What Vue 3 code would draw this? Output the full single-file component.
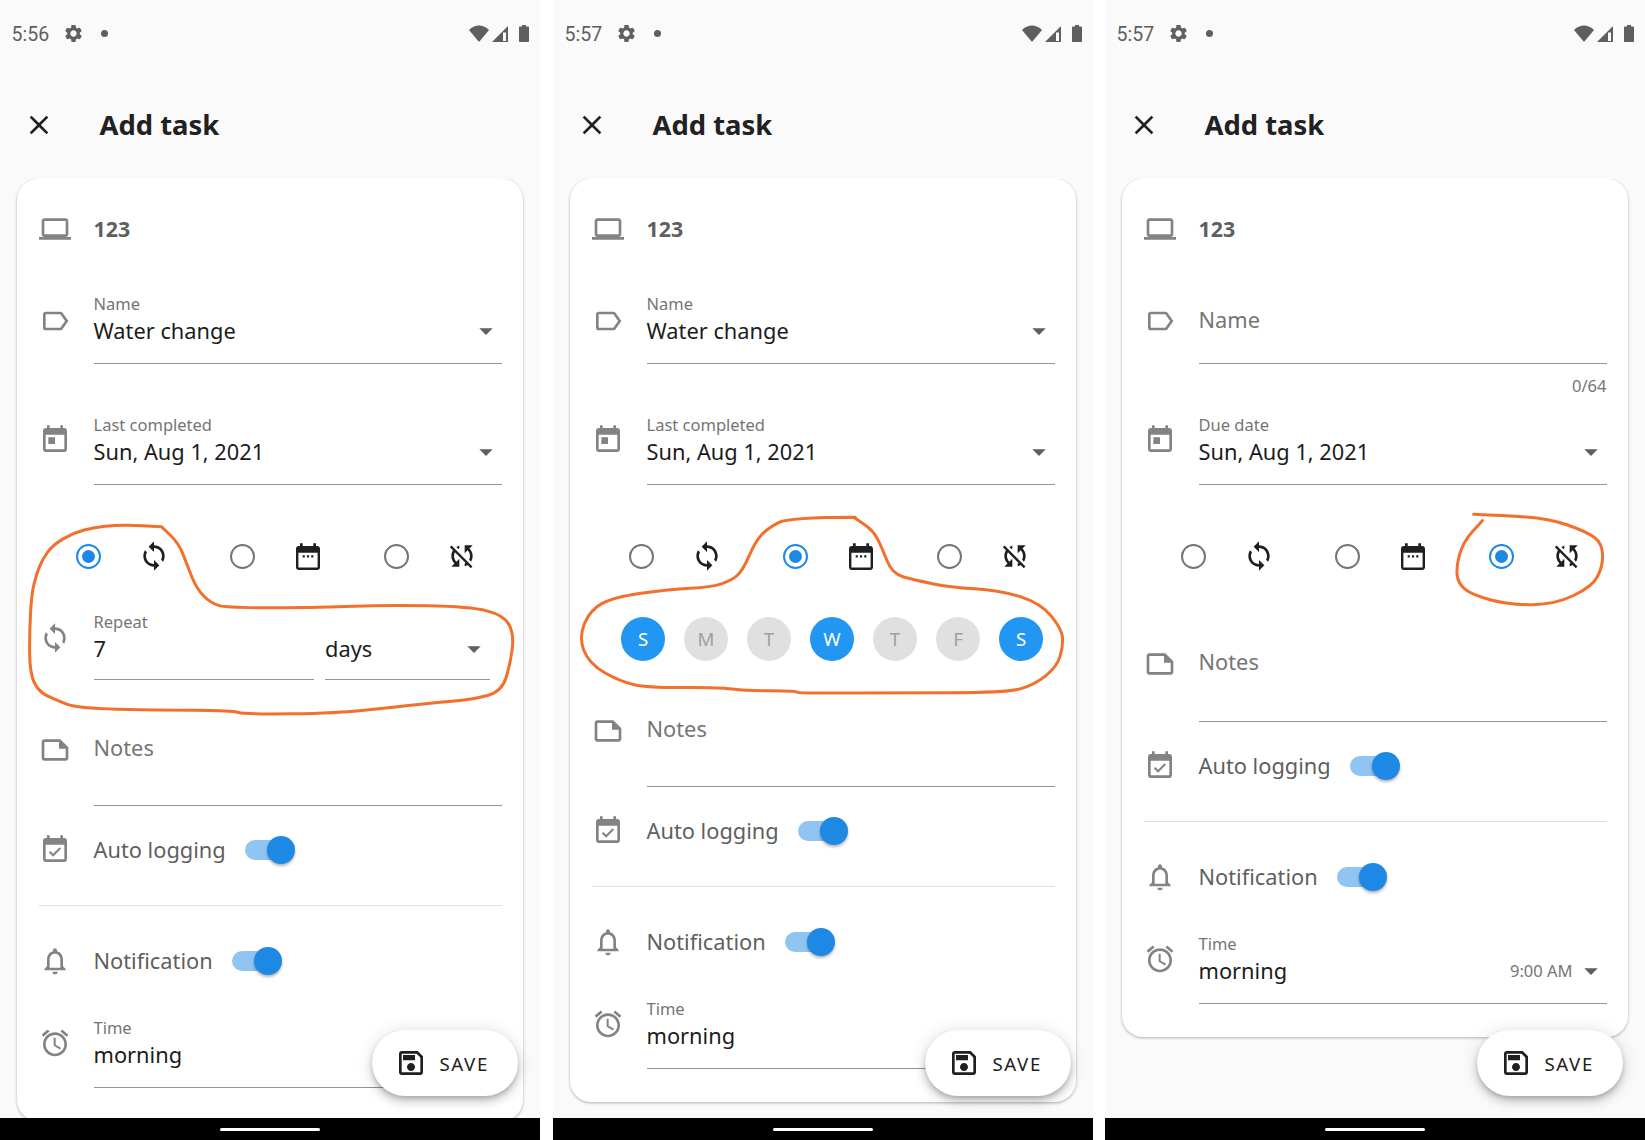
<script setup>
const icons = {
  close: "M19 6.41L17.59 5 12 10.59 6.41 5 5 6.41 10.59 12 5 17.59 6.41 19 12 13.41 17.59 19 19 17.59 13.41 12z",
  laptop: "M20 18c1.1 0 1.99-.9 1.99-2L22 6c0-1.1-.9-2-2-2H4c-1.1 0-2 .9-2 2v10c0 1.1.9 2 2 2H0v2h24v-2h-4zM4 6h16v10H4V6z",
  label: "M17.63 5.84C17.27 5.33 16.67 5 16 5L5 5.01C3.9 5.01 3 5.9 3 7v10c0 1.1.9 1.99 2 1.99L16 19c.67 0 1.27-.33 1.63-.84L22 12l-4.37-6.16zM16 17H5V7h11l3.55 5L16 17z",
  today: "M19 3h-1V1h-2v2H8V1H6v2H5c-1.11 0-1.99.9-1.99 2L3 19c0 1.1.89 2 2 2h14c1.1 0 2-.9 2-2V5c0-1.1-.9-2-2-2zm0 16H5V8h14v11zM7 10h5v5H7z",
  sync: "M12 4V1L8 5l4 4V6c3.31 0 6 2.69 6 6 0 1.01-.25 1.97-.7 2.8l1.46 1.46C19.54 15.03 20 13.57 20 12c0-4.42-3.58-8-8-8zm0 14c-3.31 0-6-2.69-6-6 0-1.01.25-1.97.7-2.8L5.24 7.74C4.46 8.97 4 10.43 4 12c0 4.42 3.58 8 8 8v3l4-4-4-4v3z",
  dates: "M19 3h-1V1h-2v2H8V1H6v2H5c-1.11 0-2 .9-2 2v14c0 1.1.89 2 2 2h14c1.1 0 2-.9 2-2V5c0-1.1-.9-2-2-2zm0 16.2H4.8V8h14.4v11.2zM8 10h1.6v1.6H8zM11.2 10h1.6v1.6h-1.6zM14.4 10H16v1.6h-1.6z",
  syncOff: "M10 6.35V4.26c-.8.21-1.55.54-2.23.96l1.46 1.46c.25-.12.5-.24.77-.33zm-7.14-.94l2.36 2.36C4.45 8.99 4 10.44 4 12c0 2.21.91 4.2 2.36 5.64L4 20h6v-6l-2.24 2.24C6.68 15.15 6 13.66 6 12c0-1 .25-1.94.68-2.77l8.08 8.08c-.25.13-.5.25-.77.34v2.09c.8-.21 1.55-.54 2.23-.96l2.36 2.36 1.27-1.27L4.14 4.14 2.86 5.41zM20 4h-6v6l2.24-2.24C17.32 8.85 18 10.34 18 12c0 1-.25 1.94-.68 2.77l1.46 1.46C19.55 15.01 20 13.56 20 12c0-2.21-.91-4.2-2.36-5.64L20 4z",
  note: "M16 4H4c-1.1 0-2 .9-2 2v12c0 1.1.9 2 2 2h16c1.1 0 2-.9 2-2v-8l-6-6zM20 18H4V6h11v5h5v7z",
  autolog: "M16.53 11.06L15.47 10l-4.88 4.88-2.12-2.12-1.06 1.06L10.59 17l5.94-5.94zM19 3h-1V1h-2v2H8V1H6v2H5c-1.11 0-1.99.9-1.99 2L3 19c0 1.1.89 2 2 2h14c1.1 0 2-.9 2-2V5c0-1.1-.9-2-2-2zm0 16H5V8h14v11z",
  bell: "M12 22c1.1 0 2-.9 2-2h-4c0 1.1.9 2 2 2zm6-6v-5c0-3.07-1.63-5.64-4.5-6.32V4c0-.83-.67-1.5-1.5-1.5s-1.5.67-1.5 1.5v.68C7.64 5.36 6 7.92 6 11v5l-2 2v1h16v-1l-2-2zm-2 1H8v-6c0-2.48 1.51-4.5 4-4.5s4 2.02 4 4.5v6z",
  alarm: "M22 5.72l-4.6-3.86-1.29 1.53 4.6 3.86L22 5.72zM7.88 3.39L6.6 1.86 2 5.71l1.29 1.53 4.59-3.85zM12.5 8H11v6l4.75 2.85.75-1.23-4-2.37V8zM12 4c-4.97 0-9 4.03-9 9s4.02 9 9 9c4.97 0 9-4.03 9-9s-4.03-9-9-9zm0 16c-3.87 0-7-3.13-7-7s3.13-7 7-7 7 3.13 7 7-3.13 7-7 7z",
  save: "M17 3H5c-1.11 0-2 .9-2 2v14c0 1.1.89 2 2 2h14c1.1 0 2-.9 2-2V7l-4-4zm2 16H5V5h11.17L19 7.83V19zm-7-7c-1.66 0-3 1.34-3 3s1.34 3 3 3 3-1.34 3-3-1.34-3-3-3zM6 6h9v4H6z",
  gear: "M19.14 12.94c.04-.3.06-.61.06-.94 0-.32-.02-.64-.07-.94l2.03-1.58c.18-.14.23-.41.12-.61l-1.92-3.32c-.12-.22-.37-.29-.59-.22l-2.39.96c-.5-.38-1.03-.7-1.62-.94l-.36-2.54c-.04-.24-.24-.41-.48-.41h-3.84c-.24 0-.43.17-.47.41l-.36 2.54c-.59.24-1.13.57-1.62.94l-2.39-.96c-.22-.08-.47 0-.59.22L2.74 8.87c-.12.21-.08.47.12.61l2.03 1.58c-.05.3-.09.63-.09.94s.02.64.07.94l-2.03 1.58c-.18.14-.23.41-.12.61l1.92 3.32c.12.22.37.29.59.22l2.39-.96c.5.38 1.03.7 1.62.94l.36 2.54c.05.24.24.41.48.41h3.84c.24 0 .44-.17.47-.41l.36-2.54c.59-.24 1.13-.56 1.62-.94l2.39.96c.22.08.47 0 .59-.22l1.92-3.32c.12-.22.07-.47-.12-.61l-2.01-1.58zM12 15.6c-1.98 0-3.6-1.62-3.6-3.6s1.62-3.6 3.6-3.6 3.6 1.62 3.6 3.6-1.62 3.6-3.6 3.6z",
  arrow: "M7 10l5 5 5-5z",
};

const screens = [
  { time: "5:56", mode: "repeat", named: true, dateLabel: "Last completed" },
  { time: "5:57", mode: "weekly", named: true, dateLabel: "Last completed" },
  { time: "5:57", mode: "none", named: false, dateLabel: "Due date" },
];

const modes = [
  { id: "repeat", icon: "sync" },
  { id: "weekly", icon: "dates" },
  { id: "none", icon: "syncOff" },
];

const days = [
  { d: "S", on: true },
  { d: "M", on: false },
  { d: "T", on: false },
  { d: "W", on: true },
  { d: "T", on: false },
  { d: "F", on: false },
  { d: "S", on: true },
];

// hand drawn marks, traced from the crops: [originX, originY, scaleX, points]
const marks = [
  [0, 380, 2.85, [[460,440],[400,436],[330,435],[270,442],[210,458],[150,495],[120,540],[105,580],[90,640],[84,760],[85,880],[110,935],[160,960],[220,985],[450,990],[660,992],[700,1003],[960,1000],[1130,980],[1270,965],[1350,958],[1430,935],[1455,850],[1465,760],[1435,705],[1340,680],[1100,675],[920,682],[650,684],[600,670],[560,625],[535,560],[510,490],[460,440]]],
  [550, 500, 2.85, [[870,52],[680,52],[620,85],[585,125],[550,210],[520,240],[460,262],[340,268],[180,292],[115,330],[82,410],[110,490],[200,545],[280,563],[480,562],[560,572],[700,573],[710,580],[1000,578],[1300,578],[1380,555],[1445,500],[1462,440],[1460,390],[1400,310],[1280,270],[1140,262],[1040,240],[975,222],[945,140],[920,90],[870,55]]],
  [1100, 360, 2.877, [[1075,463],[1160,467],[1290,475],[1400,515],[1445,550],[1447,620],[1415,680],[1310,733],[1180,735],[1070,705],[1030,670],[1025,620],[1045,545],[1100,482]]],
];

const markPaths = marks.map(([ox, oy, sx, pts]) => {
  const p = pts.map(([x, y]) => [ox + x / sx, oy + y / 3]);
  let d = `M${p[0][0]} ${p[0][1]}`;
  for (let i = 1; i < p.length - 1; i++) {
    const mx = (p[i][0] + p[i + 1][0]) / 2;
    const my = (p[i][1] + p[i + 1][1]) / 2;
    d += `Q${p[i][0]} ${p[i][1]} ${mx} ${my}`;
  }
  const last = p[p.length - 1];
  return d + `L${last[0]} ${last[1]}`;
});
</script>

<template>
  <div class="page">
    <section v-for="(s, i) in screens" :key="i" class="screen">
      <div class="status">
        <span class="clock">{{ s.time }}</span>
        <svg class="gear" viewBox="0 0 24 24"><path :d="icons.gear" /></svg>
        <span class="dot"></span>
        <svg class="wifi" viewBox="0 0 20 17"><path d="M10 17L0 5C2.8 2 6.2.4 10 .4S17.2 2 20 5z" /></svg>
        <svg class="signal" viewBox="0 0 16 16">
          <path d="M0 16L16 0v16z" />
          <path class="slit" d="M11 6.5h3V15h-3z" />
        </svg>
        <svg class="battery" viewBox="0 0 10 17"><path d="M3 0h4v1.5h2c.6 0 1 .4 1 1V16c0 .6-.4 1-1 1H1c-.6 0-1-.4-1-1V2.500c0-.6.4-1 1-1h2z" /></svg>
      </div>

      <header class="appbar">
        <svg class="icon dark" viewBox="0 0 24 24"><path :d="icons.close" /></svg>
        <h1>Add task</h1>
      </header>

      <main class="body">
        <div class="card">
          <div class="row device">
            <svg class="icon" viewBox="0 0 24 24"><path :d="icons.laptop" /></svg>
            <strong>123</strong>
          </div>

          <div class="row">
            <svg class="icon nudge" viewBox="0 0 24 24"><path :d="icons.label" /></svg>
            <div v-if="s.named" class="field">
              <label>Name</label>
              <div class="value">
                <span>Water change</span>
                <svg class="icon arrow" viewBox="0 0 24 24"><path :d="icons.arrow" /></svg>
              </div>
            </div>
            <div v-else class="field empty-name">
              <span class="placeholder">Name</span>
            </div>
          </div>
          <div class="helper"><span v-if="!s.named">0/64</span></div>

          <div class="row">
            <svg class="icon lift" viewBox="0 0 24 24"><path :d="icons.today" /></svg>
            <div class="field">
              <label>{{ s.dateLabel }}</label>
              <div class="value">
                <span>Sun, Aug 1, 2021</span>
                <svg class="icon arrow" viewBox="0 0 24 24"><path :d="icons.arrow" /></svg>
              </div>
            </div>
          </div>

          <div class="modes">
            <div v-for="m in modes" :key="m.id" class="mode">
              <span class="radio" :class="{ checked: m.id === s.mode }"></span>
              <svg class="icon dark" :class="m.icon" viewBox="0 0 24 24"><path :d="icons[m.icon]" /></svg>
            </div>
          </div>

          <div v-if="s.mode === 'repeat'" class="row repeat">
            <svg class="icon nudge" viewBox="0 0 24 24"><path :d="icons.sync" /></svg>
            <div class="field every">
              <label>Repeat</label>
              <div class="value"><span>7</span></div>
            </div>
            <div class="field unit">
              <label>&nbsp;</label>
              <div class="value">
                <span>days</span>
                <svg class="icon arrow" viewBox="0 0 24 24"><path :d="icons.arrow" /></svg>
              </div>
            </div>
          </div>
          <div v-else-if="s.mode === 'weekly'" class="days">
            <span v-for="(day, n) in days" :key="n" class="day" :class="{ on: day.on }">{{ day.d }}</span>
          </div>
          <div v-else class="no-repeat"></div>

          <div class="row notes">
            <svg class="icon" viewBox="0 0 24 24"><path :d="icons.note" /></svg>
            <div class="field"><span class="placeholder">Notes</span></div>
          </div>

          <div class="row switch-row auto">
            <svg class="icon" viewBox="0 0 24 24"><path :d="icons.autolog" /></svg>
            <span class="switch-label">Auto logging</span>
            <span class="switch"><i></i></span>
          </div>

          <hr />

          <div class="row switch-row notify">
            <svg class="icon" viewBox="0 0 24 24"><path :d="icons.bell" /></svg>
            <span class="switch-label">Notification</span>
            <span class="switch"><i></i></span>
          </div>

          <div class="row time">
            <svg class="icon lift" viewBox="0 0 24 24"><path :d="icons.alarm" /></svg>
            <div class="field">
              <label>Time</label>
              <div class="value">
                <span>morning</span>
                <template v-if="!s.named">
                  <em>9:00 AM</em>
                  <svg class="icon arrow" viewBox="0 0 24 24"><path :d="icons.arrow" /></svg>
                </template>
              </div>
            </div>
          </div>
        </div>
      </main>

      <button class="save">
        <svg class="icon dark" viewBox="0 0 24 24"><path :d="icons.save" /></svg>
        <span>SAVE</span>
      </button>

      <footer class="nav"><span></span></footer>
    </section>

    <svg class="marks" width="1645" height="1140" viewBox="0 0 1645 1140">
      <path v-for="(d, i) in markPaths" :key="i" :d="d" />
    </svg>
  </div>
</template>

<style scoped>
.page {
  position: relative;
  display: flex;
  width: 1645px;
  height: 1140px;
  overflow: hidden;
  background: #fff;
  font-family: "Noto Sans", sans-serif;
}
.screen {
  position: relative;
  display: flex;
  flex-direction: column;
  flex: none;
  width: 540px;
  height: 1140px;
  background: #fafafa;
}
.screen:nth-of-type(2) { margin-left: 13px; }
.screen:nth-of-type(3) { margin-left: 12px; }

/* status bar */
.status {
  display: flex;
  align-items: center;
  flex: none;
  height: 67px;
  padding: 0 11px 0 11.5px;
}
.status svg { fill: #5f5f5f; }
.clock {
  width: 37px;
  margin-top: 1px;
  font-family: Roboto, sans-serif;
  font-size: 19.5px;
  color: #5f5f5f;
}
.gear { width: 21px; height: 21px; margin-left: 14px; }
.dot {
  width: 7px;
  height: 7px;
  margin-left: 17px;
  margin-right: auto;
  border-radius: 50%;
  background: #5f5f5f;
}
.wifi { width: 20px; height: 17px; }
.signal { width: 16px; height: 16px; margin-left: 3px; }
.status .slit { fill: #fafafa; }
.battery { width: 10px; height: 17px; margin-left: 11px; }

.appbar {
  display: flex;
  align-items: center;
  flex: none;
  height: 112px;
  padding: 3px 0 0 23px;
  box-sizing: border-box;
}
.appbar h1 {
  margin: 0 0 0 44.500px;
  font-size: 27.4px;
  font-weight: 700;
  line-height: 36px;
  color: #212121;
}

.icon {
  display: block;
  flex: none;
  width: 32px;
  height: 32px;
  fill: #838383;
}
.icon.dark { fill: #1f1f1f; }
.icon.nudge { margin-bottom: 2px; }
.icon.lift { margin-bottom: 6px; }

.body {
  flex: 1;
  min-height: 0;
  overflow: hidden;
  padding-bottom: 6px;
}
.card {
  margin: 0 17px;
  padding: 0 21.5px 33px;
  border-radius: 21px;
  background: #fff;
  box-shadow: 0 1px 3px rgba(0, 0, 0, 0.3);
}

.row {
  display: flex;
  align-items: center;
  gap: 23px;
}
.device { height: 100px; }
.device strong {
  margin-bottom: 2px;
  font-size: 21.33px;
  font-weight: 700;
  color: #5f5f5f;
}

.field {
  flex: 1;
  min-width: 0;
  height: 85px;
  padding-top: 15px;
  box-sizing: border-box;
  border-bottom: 1px solid #949494;
}
.field label {
  display: block;
  font-size: 16.5px;
  line-height: 20px;
  color: #757575;
}
.value {
  display: flex;
  align-items: flex-start;
  margin-top: 1.5px;
  font-size: 21.8px;
  line-height: 30px;
  color: #1c1c1c;
}
.value span { margin-right: auto; }
.value em {
  font-style: normal;
  font-size: 16.5px;
  color: #757575;
  margin-right: 2px;
}
.arrow {
  margin-top: -1px;
  fill: #5f5f5f;
}
.placeholder {
  font-size: 21.8px;
  line-height: 30px;
  color: #757575;
}
.empty-name {
  padding-top: 26px;
}
.helper {
  height: 36px;
  padding-top: 12px;
  box-sizing: border-box;
  font-size: 16.5px;
  line-height: 20px;
  text-align: right;
  color: #757575;
}

.modes {
  display: flex;
  margin: 55px 0 0 37px;
}
.mode {
  display: flex;
  align-items: center;
  flex: none;
  gap: 37.5px;
  width: 154px;
}
.icon.dates { transform: translateY(2px); }
.radio {
  display: flex;
  align-items: center;
  justify-content: center;
  flex: none;
  width: 25px;
  height: 25px;
  box-sizing: border-box;
  border: 2.5px solid #757575;
  border-radius: 50%;
}
.radio.checked { border-color: #1e88e5; }
.radio.checked::after {
  content: "";
  width: 13px;
  height: 13px;
  border-radius: 50%;
  background: #1e88e5;
}

.repeat {
  margin: 25px 0 54px;
  gap: 0;
}
.repeat .field { height: 83px; }
.repeat .every { flex: none; width: 220.5px; margin-left: 23px; }
.repeat .unit { flex: none; width: 165px; margin-left: 11px; }

.days {
  display: flex;
  gap: 19px;
  margin: 45px 0 54px 29.500px;
}
.day {
  display: flex;
  align-items: center;
  justify-content: center;
  width: 44px;
  height: 44px;
  border-radius: 50%;
  background: #e0e0e0;
  font-size: 18.67px;
  line-height: 24px;
  padding-bottom: 1px;
  box-sizing: border-box;
  color: #9e9e9e;
}
.day.on {
  background: #2196f3;
  color: #fff;
}
.no-repeat { height: 76px; }
.no-repeat + .notes .field { height: 74px; }

.notes { align-items: flex-start; }
.notes .field {
  height: 72px;
  padding-top: 0;
}
.notes .placeholder { line-height: 27px; }

.switch-row {
  height: 30px;
}
.switch-label {
  font-size: 21.8px;
  line-height: 30px;
  color: #5f5f5f;
}
.switch {
  position: relative;
  width: 44px;
  height: 20px;
  margin-left: -4px;
  border-radius: 10px;
  background: #90c4f3;
}
.switch i {
  position: absolute;
  top: -4px;
  right: -6px;
  width: 28px;
  height: 28px;
  border-radius: 50%;
  background: #1e88e5;
  box-shadow: 0 2px 3px rgba(0, 0, 0, 0.3);
}
.auto { margin-top: 29px; }
hr {
  height: 1px;
  margin: 40px 0;
  border: 0;
  background: #e0e0e0;
}
.time { margin-top: 27px; }

.save {
  position: absolute;
  right: 22px;
  bottom: 44px;
  display: flex;
  align-items: center;
  gap: 12px;
  height: 66px;
  padding: 0 29px 0 23px;
  border: 0;
  border-radius: 33px;
  background: #fff;
  box-shadow: 0 3px 5px -1px rgba(0, 0, 0, 0.2), 0 6px 10px rgba(0, 0, 0, 0.14), 0 1px 18px rgba(0, 0, 0, 0.12);
  font-family: "Noto Sans", sans-serif;
  font-size: 18.67px;
  letter-spacing: 1.66px;
  color: #212121;
}

.nav {
  display: flex;
  align-items: center;
  justify-content: center;
  flex: none;
  height: 22px;
  background: #000;
}
.nav span {
  width: 100px;
  height: 3px;
  margin-top: 1px;
  border-radius: 2px;
  background: #fff;
}

.marks {
  position: absolute;
  top: 0;
  left: 0;
  pointer-events: none;
}
.marks path {
  fill: none;
  stroke: #f26f2c;
  stroke-width: 3;
  stroke-linecap: round;
  stroke-linejoin: round;
}
</style>
